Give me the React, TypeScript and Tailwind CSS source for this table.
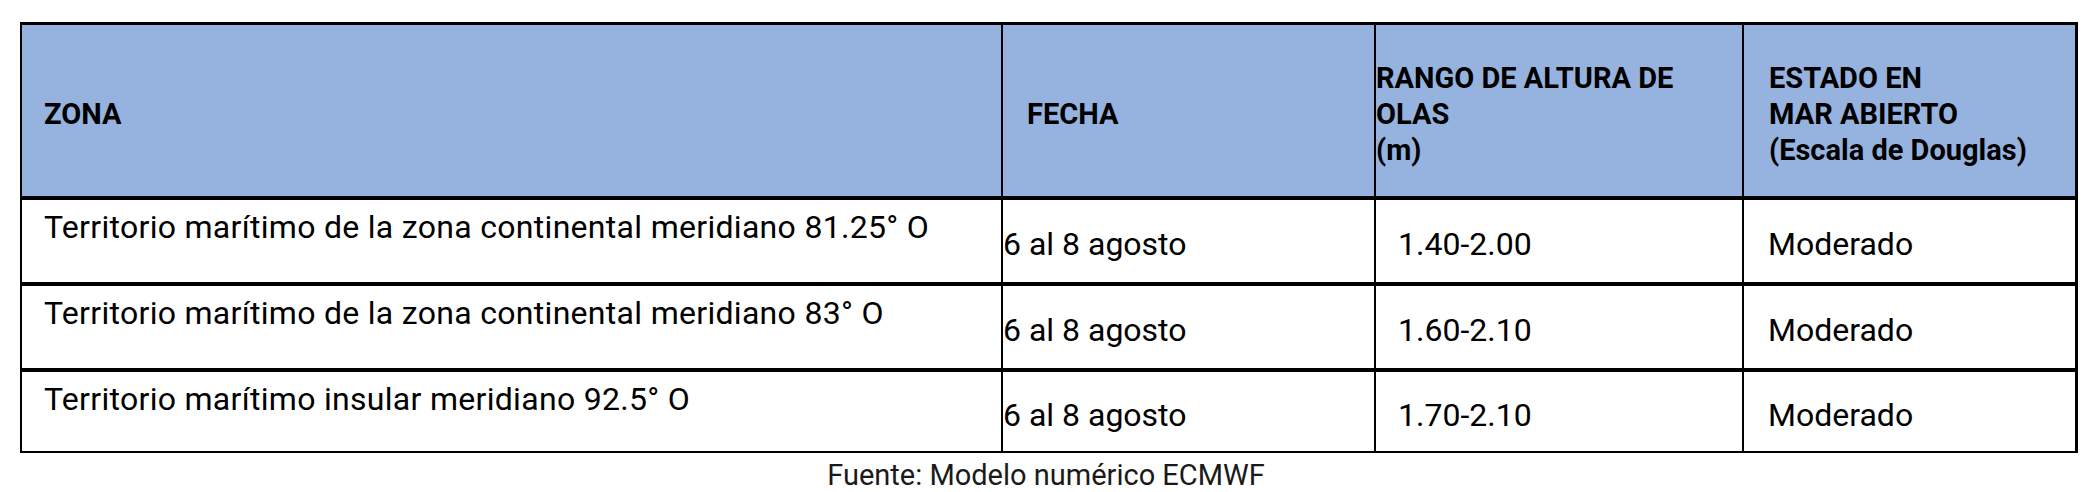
const rows = [
  {
    zona: "Territorio marítimo de la zona continental meridiano 81.25° O",
    fecha: "6 al 8 agosto",
    rango: "1.40-2.00",
    estado: "Moderado",
    height: "h-[86px] border-b-4",
  },
  {
    zona: "Territorio marítimo de la zona continental meridiano 83° O",
    fecha: "6 al 8 agosto",
    rango: "1.60-2.10",
    estado: "Moderado",
    height: "h-[86px] border-b-4",
  },
  {
    zona: "Territorio marítimo insular meridiano 92.5° O",
    fecha: "6 al 8 agosto",
    rango: "1.70-2.10",
    estado: "Moderado",
    height: "h-[81px] border-b-2",
  },
];

const headCell =
  "flex h-[175px] items-center border-b-4 border-black bg-[#95b3de] pt-[7px] text-[29px] font-bold leading-[36px]";

export default function App() {
  return (
    <div className="min-h-[492px] w-[2092px] bg-white pt-[22px] font-['Roboto',sans-serif] text-black">
      <div className="ml-[20px] grid w-[2058px] grid-cols-[981px_373px_368px_334px] border-l-2 border-t-[3px] border-black">
        <div className={`${headCell} border-r-2 pl-[22px]`}>ZONA</div>
        <div className={`${headCell} border-r-2 pl-[24px]`}>FECHA</div>
        <div className={`${headCell} border-r-2`}>
          <p>
            RANGO DE ALTURA DE
            <br />
            OLAS
            <br />
            (m)
          </p>
        </div>
        <div className={`${headCell} border-r-[3px] pl-[25px]`}>
          <p>
            ESTADO EN
            <br />
            MAR ABIERTO
            <br />
            (Escala de Douglas)
          </p>
        </div>

        {rows.map((row) => (
          <div key={row.zona} className="contents text-[32px] leading-[38px]">
            <div className={`${row.height} flex items-start border-r-2 border-black pl-[22px] pt-[8px] tracking-[0.3px]`}>
              {row.zona}
            </div>
            <div className={`${row.height} flex items-center border-r-2 border-black pt-[6px]`}>
              {row.fecha}
            </div>
            <div className={`${row.height} flex items-center border-r-2 border-black pl-[22px] pt-[6px]`}>
              {row.rango}
            </div>
            <div className={`${row.height} flex items-center border-r-[3px] border-black pl-[24px] pt-[6px]`}>
              {row.estado}
            </div>
          </div>
        ))}
      </div>
      <p className="mt-[8px] text-center text-[29px] leading-[29px] text-[#1a1a1a]">
        Fuente: Modelo numérico ECMWF
      </p>
    </div>
  );
}
